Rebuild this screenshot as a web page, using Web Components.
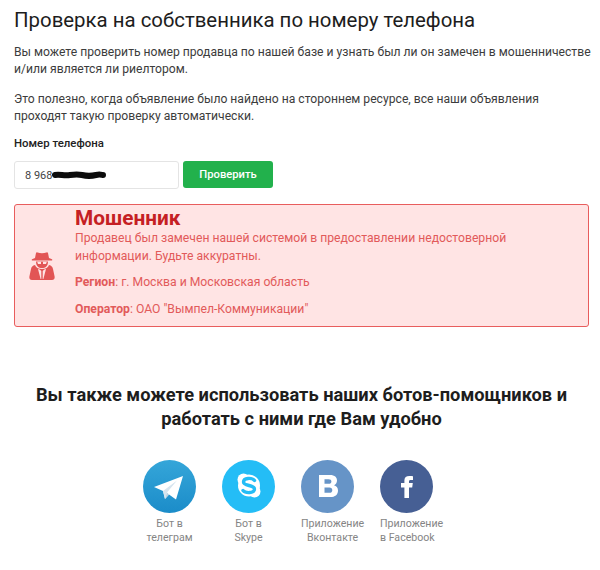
<!DOCTYPE html>
<html lang="ru">
<head>
<meta charset="utf-8">
<title>Проверка на собственника</title>
<style>
  html, body { margin: 0; background: #fff; }
  body { font-family: Roboto, "Liberation Sans", sans-serif; color: #333; }
</style>
</head>
<body>
<check-page>
  <phone-form></phone-form>
  <fraud-alert></fraud-alert>
  <bot-list>
    <bot-link label="Бот в<br>телеграм" kind="telegram"></bot-link>
    <bot-link label="Бот в<br>Skype" kind="skype"></bot-link>
    <bot-link label="Приложение<br>Вконтакте" kind="vk" overflow></bot-link>
    <bot-link label="Приложение<br>в Facebook" kind="facebook" overflow left></bot-link>
  </bot-list>
</check-page>

<script>
class CheckPage extends HTMLElement {
  constructor() {
    super();
    this.attachShadow({ mode: 'open' });
    this.shadowRoot.innerHTML = `
      <style>
        :host { display: block; box-sizing: border-box; width: 600px; height: 570px; padding: 6px 11px 0 14px; overflow: hidden; }
        h1 { margin: 0 0 10px; font-size: 20.4px; line-height: 28px; font-weight: 400; color: #1d1d1d; }
        p { margin: 0 0 13px; font-size: 12.15px; line-height: 17px; color: #3c3c3c; white-space: nowrap; }
        p + p { margin-bottom: 12px; }
      </style>
      <h1>Проверка на собственника по номеру телефона</h1>
      <p>Вы можете проверить номер продавца по нашей базе и узнать был ли он замечен в мошенничестве<br>и/или является ли риелтором.</p>
      <p>Это полезно, когда объявление было найдено на стороннем ресурсе, все наши объявления<br>проходят такую проверку автоматически.</p>
      <slot></slot>
    `;
  }
}

class PhoneForm extends HTMLElement {
  constructor() {
    super();
    this.attachShadow({ mode: 'open' });
    this.shadowRoot.innerHTML = `
      <style>
        :host { display: block; margin-top: -2px; }
        label { display: block; font-size: 11.4px; line-height: 16px; font-weight: 500; color: #222; margin-bottom: 10px; }
        .row { display: flex; gap: 4px; }
        .field { box-sizing: border-box; width: 165px; height: 28px; border: 1px solid #e4e4e4; border-radius: 3px; padding-left: 10px; display: flex; align-items: center; gap: 0; font-size: 11px; color: #444; }
        svg { display: block; }
        .btn { width: 90px; height: 27px; border-radius: 3px; background: #22b14c; color: #fff; font-size: 11.2px; font-weight: 500; display: flex; align-items: center; justify-content: center; }
      </style>
      <label>Номер телефона</label>
      <div class="row">
        <div class="field">
          <span>8 968</span>
          <svg width="54" height="10" viewBox="0 0 54 10"><path d="M3 5 C8 4 12 6 18 5 S26 4 30 5 S40 6 44 5 S50 5 51 5" fill="none" stroke="#0c0c0c" stroke-width="6" stroke-linecap="round"/></svg>
        </div>
        <div class="btn">Проверить</div>
      </div>
    `;
  }
}

class FraudAlert extends HTMLElement {
  constructor() {
    super();
    this.attachShadow({ mode: 'open' });
    this.shadowRoot.innerHTML = `
      <style>
        :host { display: flex; box-sizing: border-box; height: 123px; margin-top: 15px; background: #ffe4e4; border: 1px solid #e85d5d; border-radius: 3px; color: #e25a5a; }
        .icon { width: 60px; flex: none; display: flex; align-items: center; justify-content: center; margin-left: -3px; }
        .body { padding-top: 3px; font-size: 12.2px; line-height: 18px; padding-left: 3px; }
        h2 { margin: 0; font-size: 20.8px; line-height: 21px; font-weight: 700; color: #c51f24; }
        p { margin: 0 0 9px; white-space: nowrap; }
        p.lead { margin-bottom: 8px; }
        b { font-weight: 700; }
      </style>
      <div class="icon">
        <svg width="26" height="28" viewBox="0 0 26 28" fill="#e25555">
          <path d="M7 1 Q7.4 0 8.6 0.4 C11 1.4 15 1.4 17.4 0.4 Q18.6 0 19 1 L20 6 L23 7.2 Q23.5 8 23 8.4 H3 Q2.5 8 3 7.2 L6 6 Z"/>
          <path d="M7 9.4 H19 C19 14 16.5 16 13 16 C9.5 16 7 14 7 9.4 Z"/>
          <path fill-rule="evenodd" d="M6 13 C7 15.5 9 17 13 17 C17 17 19 15.5 20 13 C22.4 13.6 23.6 15 24 17 L25.6 24.6 C26 26.8 25 28 23 28 H3 C1 28 0 26.8 0.4 24.6 L2 17 C2.4 15 3.6 13.6 6 13 Z M9 17 L11.6 27 H12.3 V19 L10.6 17.4 Z M17 17 L14.4 27 H13.7 V19 L15.4 17.4 Z"/>
          <path d="M8.2 9.8 H12 V12 H9 Z M14 9.8 H17.8 L17 12 H14 Z" fill="#ffe4e4"/>
        </svg>
      </div>
      <div class="body">
        <h2>Мошенник</h2>
        <p class="lead">Продавец был замечен нашей системой в предоставлении недостоверной<br>информации. Будьте аккуратны.</p>
        <p><b>Регион</b>: г. Москва и Московская область</p>
        <p><b>Оператор</b>: ОАО "Вымпел-Коммуникации"</p>
      </div>
    `;
  }
}

class BotList extends HTMLElement {
  constructor() {
    super();
    this.attachShadow({ mode: 'open' });
    this.shadowRoot.innerHTML = `
      <style>
        :host { display: block; margin-top: 56px; }
        h3 { margin: 0 0 29px; text-align: center; font-size: 18.25px; line-height: 24px; font-weight: 700; color: #1d1d1d; white-space: nowrap; }
        .row { display: flex; justify-content: center; gap: 26px; padding-right: 27px; }
      </style>
      <h3>Вы также можете использовать наших ботов-помощников и<br>работать с ними где Вам удобно</h3>
      <div class="row"><slot></slot></div>
    `;
  }
}

const BOT_ICONS = {
  telegram: `<svg width="53" height="53" viewBox="0 0 53 53">
      <defs><linearGradient id="tg" x1="0" y1="0" x2="0" y2="1"><stop offset="0" stop-color="#35a6d9"/><stop offset="1" stop-color="#1b8cc9"/></linearGradient></defs>
      <circle cx="26.5" cy="26.5" r="26.5" fill="url(#tg)"/>
      <path d="M11 27 L40 16 L33 39.5 L26 34.5 L22 39 L20 31 Z" fill="#fff"/>
      <path d="M20 31 L34 20.5 L24 32.5 L22 39 Z" fill="#d6e4ee"/>
      <path d="M24 32.5 L26 34.5 L22 39 Z" fill="#b9d2e2"/>
    </svg>`,
  skype: `<svg width="53" height="53" viewBox="0 0 53 53">
      <circle cx="26.5" cy="26.5" r="26.5" fill="#24bdf6"/>
      <circle cx="27" cy="25.5" r="11" fill="#fff"/>
      <circle cx="21.5" cy="19.5" r="6" fill="#fff"/>
      <circle cx="32.5" cy="31.5" r="6" fill="#fff"/>
      <path d="M32.5 20.5 C30 17.5 21.5 17.5 21.5 22 C21.5 26.5 32.5 24.5 32.5 29 C32.5 33.5 23.5 33.5 21 30.5" fill="none" stroke="#24bdf6" stroke-width="3.4" stroke-linecap="round"/>
    </svg>`,
  vk: `<svg width="53" height="53" viewBox="0 0 53 53">
      <circle cx="26.5" cy="26.5" r="26.5" fill="#6694c7"/>
      <path fill-rule="evenodd" fill="#fff" d="M18 15 H29 C33.8 15 36 17.4 36 20.6 C36 22.8 34.8 24.6 33 25.2 C35.4 25.8 37 27.8 37 30.4 C37 34.6 34 37 29.4 37 H18 Z M23.5 19.2 V23.8 H27.6 C29.4 23.8 30.4 23 30.4 21.5 C30.4 20 29.4 19.2 27.6 19.2 Z M23.5 27.6 V32.8 H28.4 C30.2 32.8 31.3 31.9 31.3 30.2 C31.3 28.5 30.2 27.6 28.4 27.6 Z"/>
    </svg>`,
  facebook: `<svg width="53" height="53" viewBox="0 0 53 53">
      <circle cx="26.5" cy="26.5" r="26.5" fill="#465f94"/>
      <path fill="#fff" d="M24.4 38 V27.6 H21 V23 H24.4 V20.2 C24.4 17.6 26.2 16 29.4 16 C30.8 16 32 16.1 33 16.3 V20 H30.6 C29.4 20 29 20.6 29 21.6 V23 H32.8 L32.2 27.6 H29 V38 Z"/>
    </svg>`
};

class BotLink extends HTMLElement {
  constructor() {
    super();
    this.attachShadow({ mode: 'open' });
  }

  connectedCallback() {
    this.shadowRoot.innerHTML = `
      <style>
        :host { display: flex; flex-direction: column; align-items: center; width: 53px; }
        :host([overflow]) { align-items: flex-start; }
        :host([left]) span { text-align: left; }
        svg { display: block; }
        span { margin-top: 4px; white-space: nowrap; text-align: center; font-size: 10.6px; line-height: 14px; color: #858585; }
      </style>
      ${BOT_ICONS[this.getAttribute('kind')]}
      <span>${this.getAttribute('label')}</span>
    `;
  }
}

customElements.define('check-page', CheckPage);
customElements.define('phone-form', PhoneForm);
customElements.define('fraud-alert', FraudAlert);
customElements.define('bot-list', BotList);
customElements.define('bot-link', BotLink);
</script>
</body>
</html>
